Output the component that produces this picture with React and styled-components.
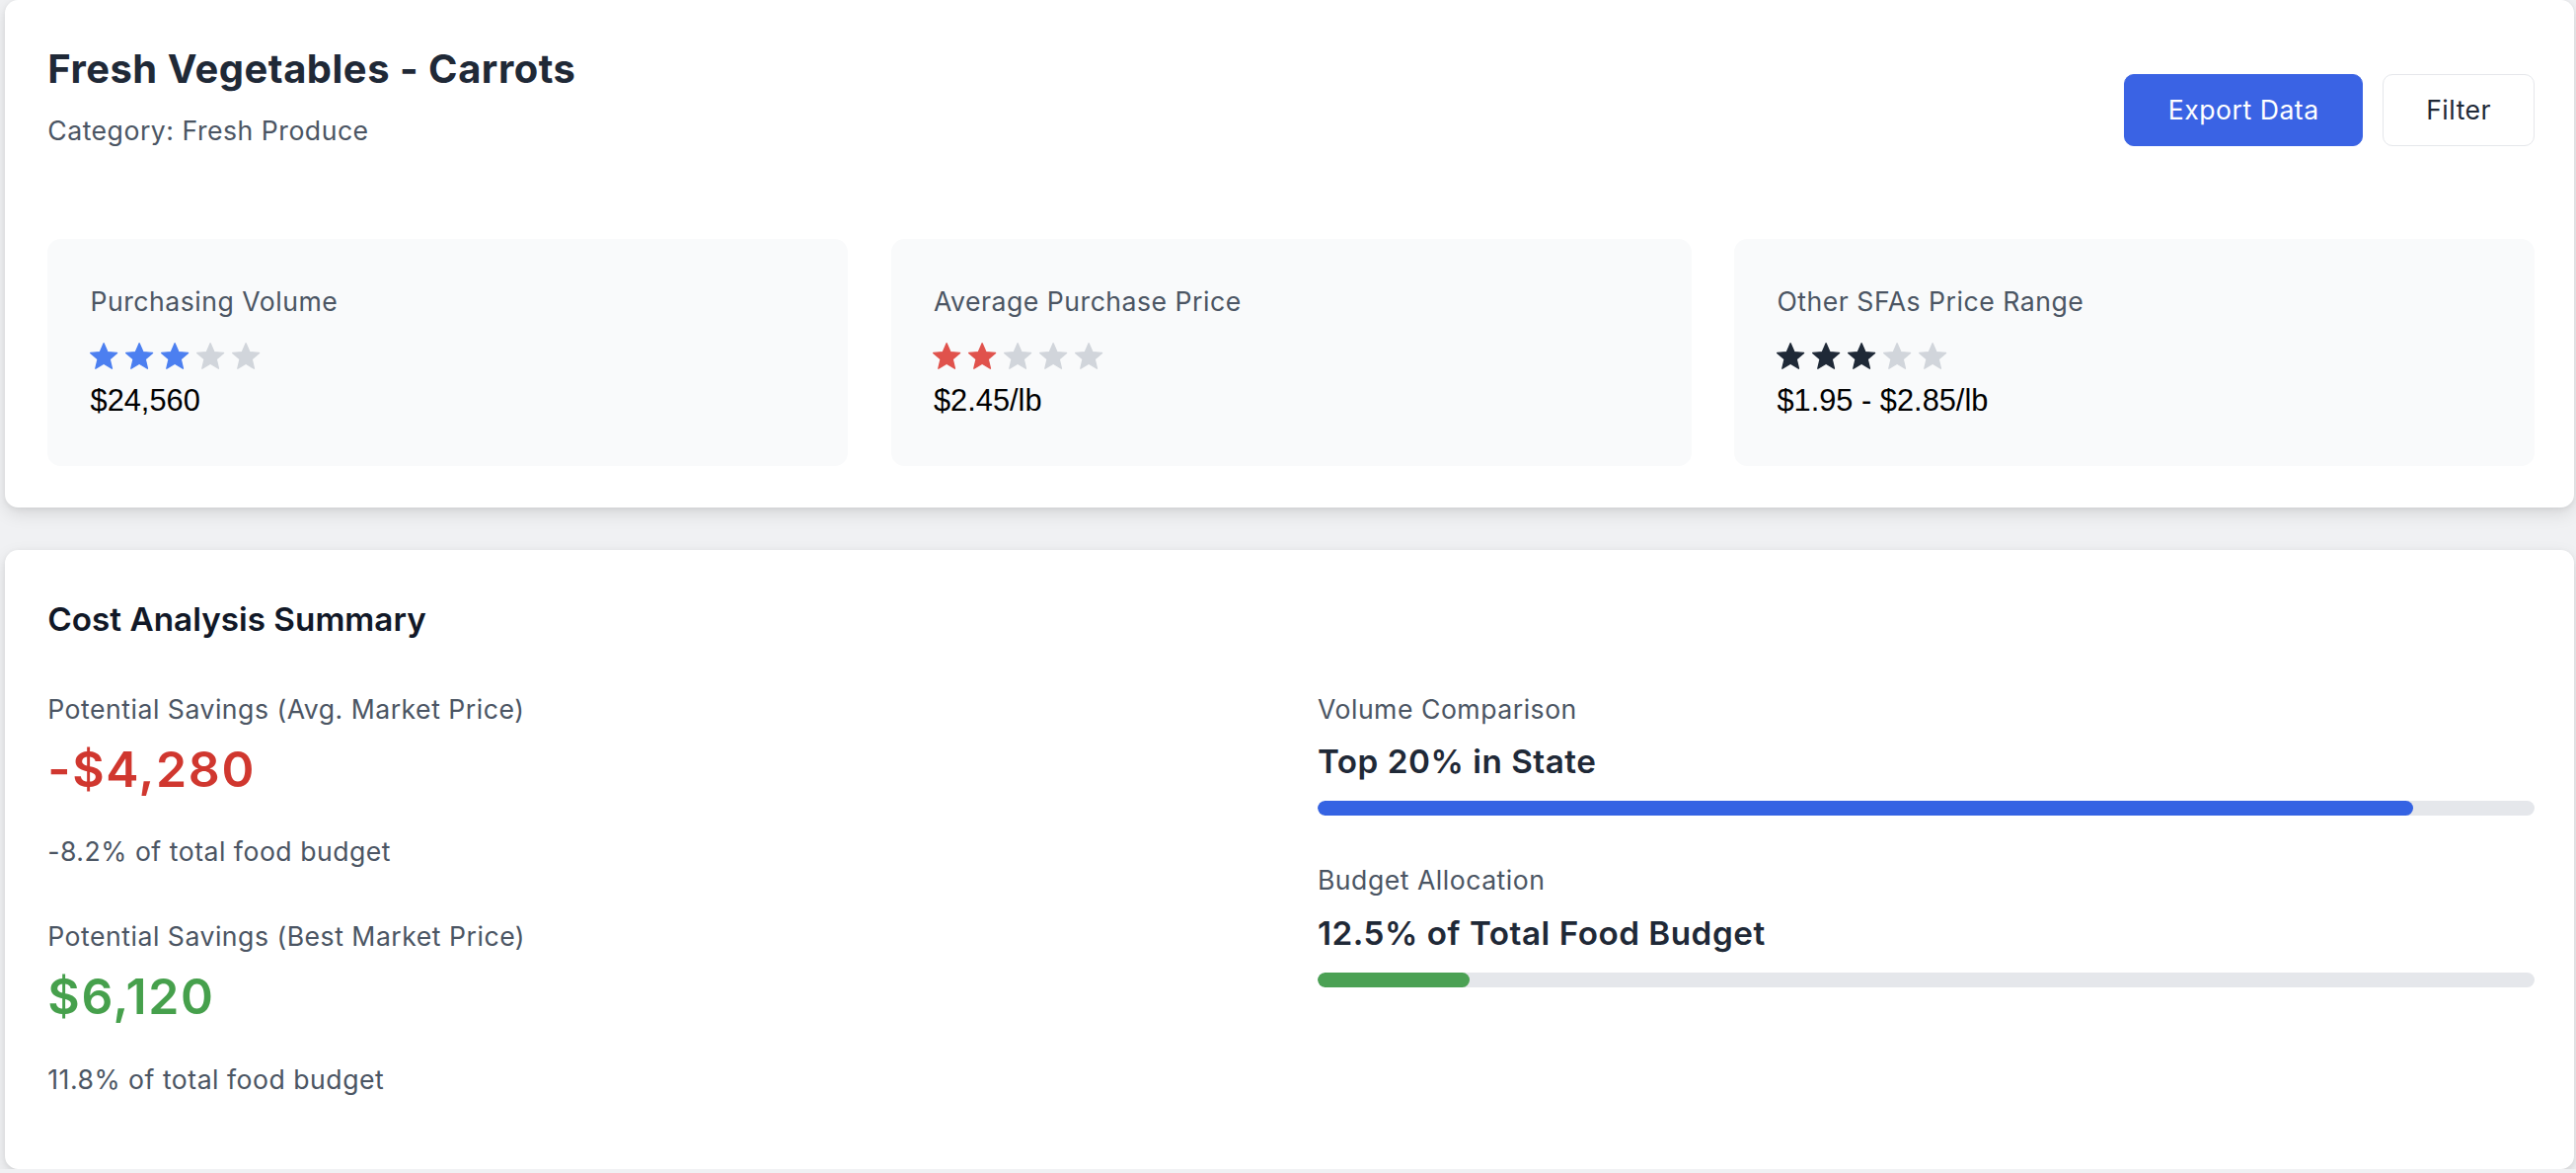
import React from "react";
import styled, { createGlobalStyle } from "styled-components";

const GlobalStyle = createGlobalStyle`
  html {
    zoom: 1.6645;
  }
  body {
    margin: 0;
    background: #f0f1f3;
    font-family: Inter, "Noto Sans", "Liberation Sans", sans-serif;
    color: #1f2937;
  }
  * {
    box-sizing: border-box;
  }
`;

const stats = [
  { label: "Purchasing Volume", rating: 3, color: "#4c7ff0", value: "$24,560" },
  { label: "Average Purchase Price", rating: 2, color: "#e0524c", value: "$2.45/lb" },
  { label: "Other SFAs Price Range", rating: 3, color: "#1f2937", value: "$1.95 - $2.85/lb" },
];

const savings = [
  {
    label: "Potential Savings (Avg. Market Price)",
    value: "-$4,280",
    tone: "#d0372f",
    note: "-8.2% of total food budget",
  },
  {
    label: "Potential Savings (Best Market Price)",
    value: "$6,120",
    tone: "#46a04c",
    note: "11.8% of total food budget",
  },
];

const comparisons = [
  { label: "Volume Comparison", value: "Top 20% in State", percent: 90, color: "#3563e3" },
  { label: "Budget Allocation", value: "12.5% of Total Food Budget", percent: 12.5, color: "#4ba154" },
];

function Star({ filled, color }) {
  return (
    <StarIcon viewBox="0 0 24 24" $color={filled ? color : "#d1d5db"}>
      <path d="M12 17.27L18.18 21l-1.64-7.03L22 9.24l-7.19-.61L12 2 9.19 8.63 2 9.24l5.46 4.73L5.82 21z" />
    </StarIcon>
  );
}

function Rating({ rating, color }) {
  return (
    <Stars>
      {[0, 1, 2, 3, 4].map((i) => (
        <Star key={i} filled={i < rating} color={color} />
      ))}
    </Stars>
  );
}

export default function App() {
  return (
    <>
      <GlobalStyle />
      <Page>
        <Card>
          <Header>
            <div>
              <Title>Fresh Vegetables - Carrots</Title>
              <Subtitle>Category: Fresh Produce</Subtitle>
            </div>
            <Actions>
              <Button $primary>Export Data</Button>
              <Button>Filter</Button>
            </Actions>
          </Header>

          <StatGrid>
            {stats.map((s) => (
              <StatBox key={s.label}>
                <Label>{s.label}</Label>
                <Rating rating={s.rating} color={s.color} />
                <StatValue>{s.value}</StatValue>
              </StatBox>
            ))}
          </StatGrid>
        </Card>

        <SummaryCard>
          <SectionTitle>Cost Analysis Summary</SectionTitle>
          <SummaryGrid>
            <Column>
              {savings.map((s) => (
                <Block key={s.label}>
                  <Label>{s.label}</Label>
                  <BigValue $tone={s.tone}>{s.value}</BigValue>
                  <Note>{s.note}</Note>
                </Block>
              ))}
            </Column>
            <Column>
              {comparisons.map((c) => (
                <Block key={c.label}>
                  <Label>{c.label}</Label>
                  <MidValue>{c.value}</MidValue>
                  <Track>
                    <Fill $color={c.color} style={{ width: `${c.percent}%` }} />
                  </Track>
                </Block>
              ))}
            </Column>
          </SummaryGrid>
        </SummaryCard>
      </Page>
    </>
  );
}

const Page = styled.div`
  display: flex;
  flex-direction: column;
  gap: 26px;
  padding: 0 1px 0 3px;
`;

const Card = styled.section`
  background: #ffffff;
  border-radius: 8px;
  box-shadow: 0 4px 10px rgba(0, 0, 0, 0.1), 0 1px 3px rgba(0, 0, 0, 0.06);
  padding: 26px 24px 25.5px 26px;
`;

const SummaryCard = styled(Card)`
  padding: 28px 24px 42px 26px;
`;

const Header = styled.div`
  display: flex;
  justify-content: space-between;
  align-items: flex-start;
`;

const Title = styled.h1`
  margin: 0;
  font-size: 24px;
  line-height: 32px;
  font-weight: 700;
  letter-spacing: 0.3px;
  color: #1f2937;
`;

const Subtitle = styled.p`
  margin: 10px 0 0;
  font-size: 16px;
  line-height: 24px;
  letter-spacing: 0.3px;
  color: #4b5563;
`;

const Actions = styled.div`
  display: flex;
  gap: 12px;
  margin-top: 19px;
`;

const Button = styled.button`
  height: 44px;
  padding: 0 26px;
  border-radius: 6px;
  font-family: inherit;
  font-size: 16px;
  line-height: 24px;
  letter-spacing: 0.3px;
  cursor: pointer;
  border: 1px solid ${(p) => (p.$primary ? "#3a63e4" : "#e5e7eb")};
  background: ${(p) => (p.$primary ? "#3a63e4" : "#ffffff")};
  color: ${(p) => (p.$primary ? "#ffffff" : "#1f2937")};
`;

const StatGrid = styled.div`
  display: grid;
  grid-template-columns: repeat(3, 1fr);
  gap: 26px;
  margin-top: 53.5px;
`;

const StatBox = styled.div`
  background: #f9fafb;
  border-radius: 8px;
  padding: 26.5px 24px 25px 26px;
`;

const Label = styled.div`
  font-size: 16px;
  line-height: 24px;
  letter-spacing: 0.3px;
  color: #4b5563;
`;

const Stars = styled.div`
  display: flex;
  gap: 2.2px;
  margin-top: 11px;
  margin-left: -1.6px;
`;

const StarIcon = styled.svg`
  width: 19.4px;
  height: 19.4px;
  fill: ${(p) => p.$color};
  stroke: ${(p) => p.$color};
  stroke-width: 1;
  stroke-linejoin: round;
`;

const StatValue = styled.div`
  margin-top: 4px;
  font-family: "Liberation Sans", Arial, sans-serif;
  font-size: 18.5px;
  line-height: 28px;
  color: #000000;
`;

const SectionTitle = styled.h2`
  margin: 0;
  font-size: 20px;
  line-height: 28px;
  font-weight: 600;
  color: #111827;
`;

const SummaryGrid = styled.div`
  display: grid;
  grid-template-columns: 1fr 1fr;
  gap: 32px;
  margin-top: 28.8px;
`;

const Column = styled.div`
  display: flex;
  flex-direction: column;
  gap: 27.8px;
`;

const Block = styled.div`
  display: flex;
  flex-direction: column;
`;

const BigValue = styled.div`
  margin-top: 6.8px;
  font-size: 30px;
  line-height: 36px;
  font-weight: 600;
  letter-spacing: 1px;
  color: ${(p) => p.$tone};
`;

const Note = styled.div`
  margin-top: 20px;
  font-size: 16px;
  line-height: 24px;
  letter-spacing: 0.3px;
  color: #4b5563;
`;

const MidValue = styled.div`
  margin-top: 5.8px;
  font-size: 20px;
  line-height: 28px;
  font-weight: 600;
  letter-spacing: 0.3px;
  color: #1f2937;
`;

const Track = styled.div`
  margin-top: 9.8px;
  height: 9px;
  border-radius: 999px;
  background: #e5e7eb;
  overflow: hidden;
`;

const Fill = styled.div`
  height: 100%;
  border-radius: 999px;
  background: ${(p) => p.$color};
`;
